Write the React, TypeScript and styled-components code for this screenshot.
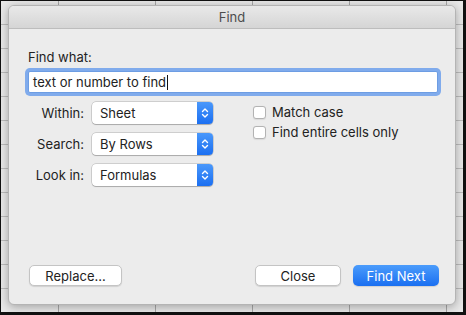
import React from "react";
import styled, { createGlobalStyle } from "styled-components";

const GlobalStyle = createGlobalStyle`
  html, body {
    margin: 0;
    padding: 0;
    background: #111;
  }
  body {
    font-family: "Inter", "Liberation Sans", sans-serif;
    -webkit-font-smoothing: antialiased;
  }
`;

const Frame = styled.div`
  width: 466px;
  height: 315px;
  box-sizing: border-box;
  padding: 1px 3px 3px 1px;
  background: #111;
  display: flex;
`;

const Sheet = styled.div`
  flex: 1;
  display: flex;
  box-sizing: border-box;
  padding: 4px 7px 7px 7px;
  background-color: #e8e8e8;
  background-image: repeating-linear-gradient(
      90deg,
      transparent 0,
      transparent 57px,
      #a8a8a8 57px,
      #a8a8a8 58px,
      transparent 58px,
      transparent 97px
    ),
    repeating-linear-gradient(
      180deg,
      transparent 0,
      transparent 23px,
      #bcbcbc 23px,
      #bcbcbc 24px
    );
`;

const Dialog = styled.div`
  flex: 1;
  display: flex;
  flex-direction: column;
  background: #ececec;
  border: 1px solid #b4b4b4;
  border-radius: 6px;
  box-shadow: 0 2px 10px rgba(0, 0, 0, 0.3);
  overflow: hidden;
`;

const TitleBar = styled.div`
  height: 22px;
  display: flex;
  align-items: center;
  justify-content: center;
  background: linear-gradient(#e9e9e9, #d5d5d5);
  border-bottom: 1px solid #bdbdbd;
  color: #4d4d4d;
  font-size: 13px;
`;

const Body = styled.div`
  flex: 1;
  display: flex;
  flex-direction: column;
  padding: 20px 16px 18px 16px;
  color: #222;
  font-size: 13px;
`;

const FieldLabel = styled.div`
  padding-left: 3px;
  line-height: 16px;
  margin-bottom: 6px;
`;

const SearchBox = styled.div`
  height: 20px;
  margin: 0 1px 0 3px;
  display: flex;
  align-items: center;
  padding: 0 4px;
  background: #fff;
  border: 1px solid #6d9de3;
  border-radius: 2px;
  box-shadow: 0 0 0 3px #80abec;
`;

const Caret = styled.span`
  display: inline-block;
  width: 1px;
  height: 15px;
  margin-left: 1px;
  background: #111;
`;

const OptionsRow = styled.div`
  display: flex;
  margin-top: 9px;
`;

const SelectGrid = styled.div`
  display: grid;
  grid-template-columns: 59px 121px;
  column-gap: 8px;
  row-gap: 9px;
  align-items: center;
`;

const SelectLabel = styled.div`
  text-align: right;
`;

const Select = styled.div`
  height: 22px;
  box-sizing: border-box;
  display: flex;
  align-items: stretch;
  background: #fff;
  border-radius: 4px;
  box-shadow: 0 0 0 0.5px rgba(0, 0, 0, 0.25), 0 1px 1px rgba(0, 0, 0, 0.18);
`;

const SelectValue = styled.div`
  flex: 1;
  display: flex;
  align-items: center;
  padding-left: 8px;
`;

const Stepper = styled.div`
  width: 16px;
  display: flex;
  align-items: center;
  justify-content: center;
  border-radius: 0 4px 4px 0;
  background: linear-gradient(#4a98fb, #1b6ff1);
`;

const CheckGroup = styled.div`
  display: flex;
  flex-direction: column;
  gap: 7px;
  margin-left: 40px;
  margin-top: 4px;
`;

const CheckRow = styled.label`
  display: flex;
  align-items: center;
  gap: 6px;
  line-height: 13px;
`;

const Box = styled.span`
  width: 13px;
  height: 13px;
  box-sizing: border-box;
  background: #fff;
  border: 1px solid #b3b3b3;
  border-radius: 3px;
  box-shadow: 0 0.5px 1px rgba(0, 0, 0, 0.08);
`;

const Spacer = styled.div`
  flex: 1;
`;

const ButtonRow = styled.div`
  display: flex;
  align-items: center;
  padding-left: 4px;
`;

const Button = styled.button<{ $primary?: boolean; $width: number }>`
  width: ${(p) => p.$width}px;
  height: 21px;
  margin-left: ${(p) => (p.$primary ? "12px" : "0")};
  padding: 0;
  font-family: inherit;
  font-size: 13px;
  border-radius: 5px;
  border: ${(p) => (p.$primary ? "none" : "1px solid #c4c4c4")};
  color: ${(p) => (p.$primary ? "#fff" : "#222")};
  background: ${(p) =>
    p.$primary ? "linear-gradient(#4b9cfb, #1a6ff1)" : "#fff"};
  box-shadow: 0 1px 1px rgba(0, 0, 0, 0.12);
`;

const StepIcon = () => (
  <svg width="8" height="12" viewBox="0 0 8 12">
    <path
      d="M1.5 4.5 L4 2 L6.5 4.5 M1.5 7.5 L4 10 L6.5 7.5"
      fill="none"
      stroke="#fff"
      strokeWidth="1.4"
      strokeLinecap="round"
      strokeLinejoin="round"
    />
  </svg>
);

const selects = [
  { label: "Within:", value: "Sheet" },
  { label: "Search:", value: "By Rows" },
  { label: "Look in:", value: "Formulas" },
];

const checks = ["Match case", "Find entire cells only"];

const App: React.FC = () => {
  return (
    <>
      <GlobalStyle />
      <Frame>
        <Sheet>
          <Dialog>
            <TitleBar>Find</TitleBar>
            <Body>
              <FieldLabel>Find what:</FieldLabel>
              <SearchBox>
                text or number to find
                <Caret />
              </SearchBox>
              <OptionsRow>
                <SelectGrid>
                  {selects.map((s) => (
                    <React.Fragment key={s.label}>
                      <SelectLabel>{s.label}</SelectLabel>
                      <Select>
                        <SelectValue>{s.value}</SelectValue>
                        <Stepper>
                          <StepIcon />
                        </Stepper>
                      </Select>
                    </React.Fragment>
                  ))}
                </SelectGrid>
                <CheckGroup>
                  {checks.map((c) => (
                    <CheckRow key={c}>
                      <Box />
                      {c}
                    </CheckRow>
                  ))}
                </CheckGroup>
              </OptionsRow>
              <Spacer />
              <ButtonRow>
                <Button $width={93}>Replace...</Button>
                <Spacer />
                <Button $width={86}>Close</Button>
                <Button $primary $width={86}>
                  Find Next
                </Button>
              </ButtonRow>
            </Body>
          </Dialog>
        </Sheet>
      </Frame>
    </>
  );
};

export default App;
